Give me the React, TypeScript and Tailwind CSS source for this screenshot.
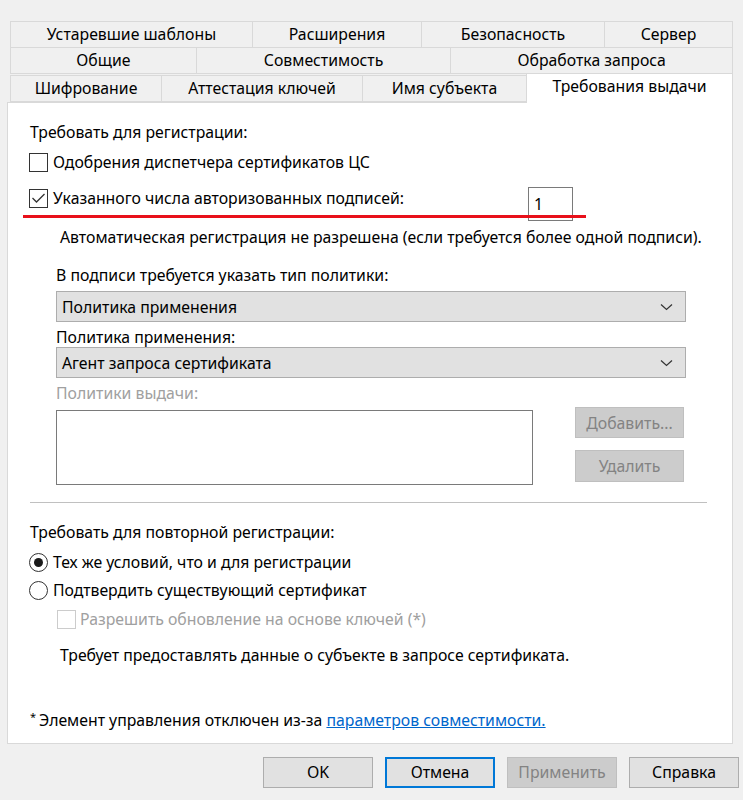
import React from "react";

const font = { fontFamily: '"Noto Sans", "Open Sans", sans-serif' };

const Tab = ({ label, w }: { label: string; w: string }) => (
  <div
    className={`${w} h-[27px] flex items-center justify-center border border-[#d9d9d9] -ml-px first:ml-0 bg-[#f0f0f0] text-[15.8px] text-black`}
  >
    {label}
  </div>
);

const Chevron = () => (
  <svg width="13" height="8" viewBox="0 0 13 8" className="mr-[4px]">
    <path d="M1 1.5 L6.5 6.5 L12 1.5" fill="none" stroke="#333" strokeWidth="1.2" />
  </svg>
);

const Select = ({ value }: { value: string }) => (
  <div className="w-[630px] h-[31px] flex items-center justify-between bg-[#e1e1e1] border border-[#adadad] pl-[5px] pr-[8px]">
    <span>{value}</span>
    <Chevron />
  </div>
);

const Checkbox = ({ checked, disabled }: { checked?: boolean; disabled?: boolean }) => (
  <div
    className={`w-[19px] h-[19px] shrink-0 border bg-white flex items-center justify-center ${
      disabled ? "border-[#cccccc]" : "border-[#333333]"
    }`}
  >
    {checked && (
      <svg width="15" height="12" viewBox="0 0 15 12">
        <path d="M1.5 6 L5.5 10 L13.5 2" fill="none" stroke="#333" strokeWidth="1.3" />
      </svg>
    )}
  </div>
);

const Radio = ({ checked }: { checked?: boolean }) => (
  <div className="w-[19px] h-[19px] shrink-0 rounded-full border border-[#333333] bg-white flex items-center justify-center">
    {checked && <div className="w-[9px] h-[9px] rounded-full bg-[#1a1a1a]" />}
  </div>
);

const DlgButton = ({
  label,
  kind,
}: {
  label: string;
  kind?: "default" | "focus" | "disabled";
}) => {
  const cls =
    kind === "focus"
      ? "border-2 border-[#0078d7] bg-[#e1e1e1] text-black"
      : kind === "disabled"
      ? "border border-[#bfbfbf] bg-[#cccccc] text-[#838383]"
      : "border border-[#adadad] bg-[#e1e1e1] text-black";
  return (
    <div className={`w-[110px] h-[31px] flex items-center justify-center text-[15.8px] ${cls}`}>
      {label}
    </div>
  );
};

export default function App() {
  return (
    <div className="w-[743px] h-[800px] bg-[#f0f0f0] pt-[21px] text-black" style={font}>
      {/* Tabs */}
      <div className="ml-[10px] w-[723px]">
        <div className="flex">
          <Tab label="Устаревшие шаблоны" w="w-[243px]" />
          <Tab label="Расширения" w="w-[170px]" />
          <Tab label="Безопасность" w="w-[184px]" />
          <Tab label="Сервер" w="w-[129px]" />
        </div>
        <div className="flex -mt-px">
          <Tab label="Общие" w="w-[187px]" />
          <Tab label="Совместимость" w="w-[256px]" />
          <Tab label="Обработка запроса" w="w-[283px]" />
        </div>
        <div className="flex -mt-px items-end">
          <Tab label="Шифрование" w="w-[152px]" />
          <Tab label="Аттестация ключей" w="w-[202px]" />
          <Tab label="Имя субъекта" w="w-[165px]" />
          <div className="relative z-10 w-[207px] h-[30px] -ml-px -mb-px bg-white border border-b-0 border-[#d9d9d9] flex justify-center pt-[1px] text-[15.8px]">
            Требования выдачи
          </div>
        </div>
      </div>

      {/* Panel */}
      <div className="relative ml-[7px] w-[726px] h-[642px] bg-white border border-[#d9d9d9] pl-[21px] pt-[19px] text-[15.8px] leading-[20px]">
        <div className="pl-[1px]">Требовать для регистрации:</div>

        <div className="mt-[10px] flex items-center gap-[5px]">
          <Checkbox />
          <span>Одобрения диспетчера сертификатов ЦС</span>
        </div>

        <div className="mt-[15px] flex items-start h-[34px]">
          <div className="w-[499px] flex items-center gap-[5px] pt-[1px]">
            <Checkbox checked />
            <span>Указанного числа авторизованных подписей:</span>
          </div>
          <div className="w-[45px] h-[34px] border border-[#7a7a7a] bg-white pl-[5px] pt-[6px]">1</div>
        </div>

        {/* red annotation underline */}
        <div className="absolute left-[15px] top-[112px] w-[563px] h-[3px] bg-[#e8101a]" />

        <div className="mt-[6px] ml-[31px]">
          Автоматическая регистрация не разрешена (если требуется более одной подписи).
        </div>

        <div className="ml-[27px]">
          <div className="mt-[18px]">В подписи требуется указать тип политики:</div>
          <div className="mt-[6px]">
            <Select value="Политика применения" />
          </div>
          <div className="mt-[5px]">Политика применения:</div>
          <Select value="Агент запроса сертификата" />
          <div className="mt-[5px] text-[#a0a0a0]">Политики выдачи:</div>
          <div className="mt-[4px] flex">
            <div className="mt-[3px] w-[477px] h-[75px] border border-[#7a7a7a] bg-white" />
            <div className="ml-[42px] flex flex-col gap-[12px]">
              <div className="w-[109px] h-[31px] flex items-center justify-center border border-[#bfbfbf] bg-[#cccccc] text-[#838383]">
                Добавить...
              </div>
              <div className="w-[109px] h-[32px] flex items-center justify-center border border-[#bfbfbf] bg-[#cccccc] text-[#838383]">
                Удалить
              </div>
            </div>
          </div>
        </div>

        <div className="mt-[17px] ml-[1px] w-[677px] h-px bg-[#c0c0c0]" />

        <div className="mt-[19px] pl-[1px]">Требовать для повторной регистрации:</div>

        <div className="mt-[10px] flex items-center gap-[5px]">
          <Radio checked />
          <span>Тех же условий, что и для регистрации</span>
        </div>
        <div className="mt-[8px] flex items-center gap-[5px]">
          <Radio />
          <span>Подтвердить существующий сертификат</span>
        </div>
        <div className="mt-[9px] ml-[28px] flex items-center gap-[4px]">
          <Checkbox disabled />
          <span className="text-[#a0a0a0]">Разрешить обновление на основе ключей (*)</span>
        </div>

        <div className="mt-[16px] ml-[31px]">
          Требует предоставлять данные о субъекте в запросе сертификата.
        </div>

        <div className="mt-[45px] pl-[1px]">
          <span className="relative -top-[5px] text-[11px] mr-[3px]">*</span>
          Элемент управления отключен из-за{" "}
          <span className="text-[#0066cc] underline">параметров совместимости.</span>
        </div>
      </div>

      {/* Dialog buttons */}
      <div className="mt-[13px] ml-[263px] flex gap-[12px]">
        <DlgButton label="OK" />
        <DlgButton label="Отмена" kind="focus" />
        <DlgButton label="Применить" kind="disabled" />
        <DlgButton label="Справка" />
      </div>
    </div>
  );
}
